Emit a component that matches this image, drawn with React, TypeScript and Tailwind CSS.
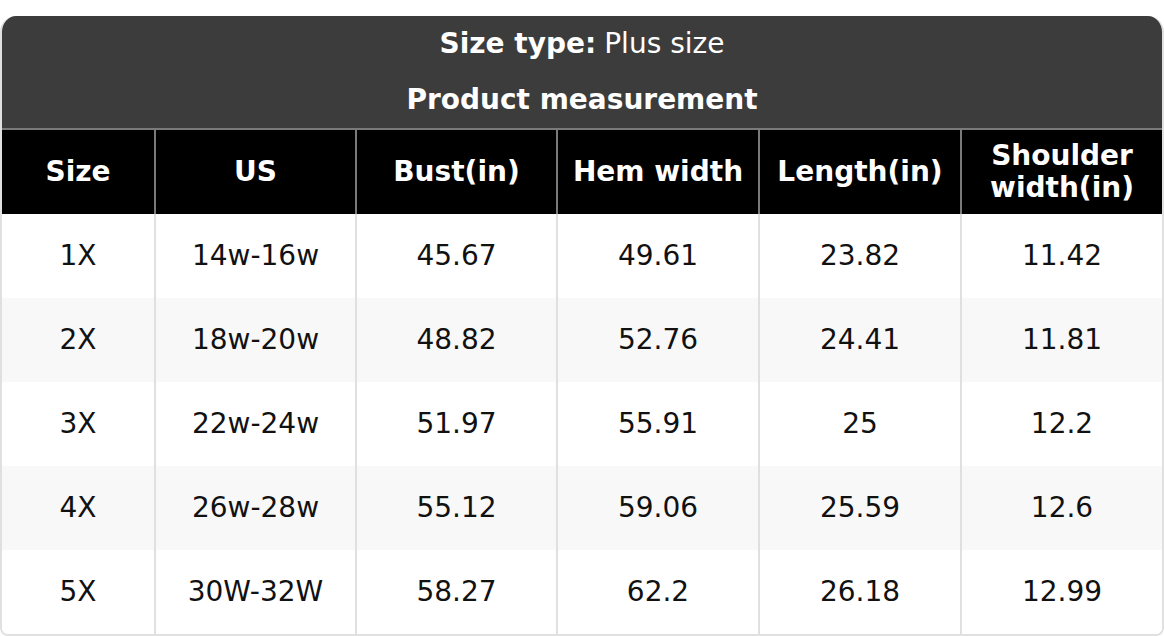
const headers = ["Size", "US", "Bust(in)", "Hem width", "Length(in)", "Shoulder width(in)"];

const rows = [
  ["1X", "14w-16w", "45.67", "49.61", "23.82", "11.42"],
  ["2X", "18w-20w", "48.82", "52.76", "24.41", "11.81"],
  ["3X", "22w-24w", "51.97", "55.91", "25", "12.2"],
  ["4X", "26w-28w", "55.12", "59.06", "25.59", "12.6"],
  ["5X", "30W-32W", "58.27", "62.2", "26.18", "12.99"],
];

const cols = "grid grid-cols-[152px_201px_201px_202px_202px_1fr]";

export default function App() {
  return (
    <div className="min-h-screen bg-white pt-4 font-['DejaVu_Sans',sans-serif] text-[28px]">
      <div className="overflow-hidden rounded-t-2xl rounded-b-lg border-r-2 border-b-2 border-l-2 border-[#e0e0e0]">
        <div className="bg-[#3c3c3c] text-center text-white">
          <div className="flex h-[56px] items-center justify-center">
            <span className="font-bold">Size type:</span>
            <span className="ml-2">Plus size</span>
          </div>
          <div className="flex h-[56px] items-center justify-center font-bold">Product measurement</div>
        </div>

        <div className={`${cols} border-t-2 border-[#7a7a7a] bg-black font-bold text-white`}>
          {headers.map((h, i) => (
            <div
              key={h}
              className={`flex h-[84px] items-center justify-center px-3 text-center leading-[32px] ${i > 0 ? "border-l-2 border-[#7a7a7a]" : ""}`}
            >
              {h}
            </div>
          ))}
        </div>

        {rows.map((r, ri) => (
          <div key={r[0]} className={`${cols} ${ri % 2 === 1 ? "bg-[#f8f8f8]" : "bg-white"} text-[#111]`}>
            {r.map((c, i) => (
              <div
                key={i}
                className={`flex h-[84px] items-center justify-center ${i > 0 ? "border-l-2 border-[#e0e0e0]" : ""}`}
              >
                {c}
              </div>
            ))}
          </div>
        ))}
      </div>
    </div>
  );
}
